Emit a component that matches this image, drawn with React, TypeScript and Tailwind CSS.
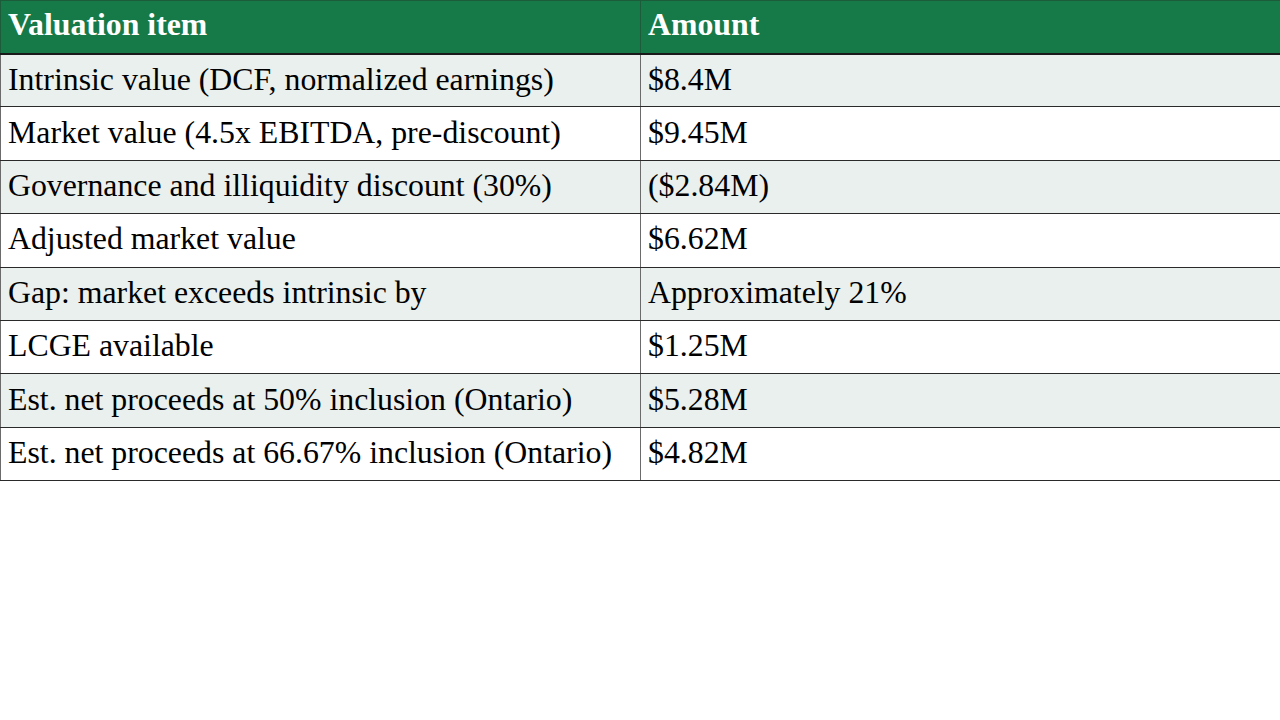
import React from "react";

const rows: [string, string][] = [
  ["Intrinsic value (DCF, normalized earnings)", "$8.4M"],
  ["Market value (4.5x EBITDA, pre-discount)", "$9.45M"],
  ["Governance and illiquidity discount (30%)", "($2.84M)"],
  ["Adjusted market value", "$6.62M"],
  ["Gap: market exceeds intrinsic by", "Approximately 21%"],
  ["LCGE available", "$1.25M"],
  ["Est. net proceeds at 50% inclusion (Ontario)", "$5.28M"],
  ["Est. net proceeds at 66.67% inclusion (Ontario)", "$4.82M"],
];

export default function App() {
  return (
    <div
      className="w-[1280px] h-[720px] bg-white overflow-hidden"
      style={{ fontFamily: '"Liberation Serif", "Times New Roman", serif' }}
    >
      <table className="w-[1280px] border-collapse table-fixed text-[31.8px] leading-none text-black">
        <colgroup>
          <col className="w-[640px]" />
          <col className="w-[640px]" />
        </colgroup>
        <thead>
          <tr className="h-[53px] bg-[#167a48] text-white">
            <th className="text-left font-bold px-[7px] pb-[3px] border border-[#1d5c3a] border-b-[#1a1a1a] border-b-2">
              Valuation item
            </th>
            <th className="text-left font-bold px-[7px] pb-[3px] border border-[#1d5c3a] border-b-[#1a1a1a] border-b-2">
              Amount
            </th>
          </tr>
        </thead>
        <tbody>
          {rows.map(([a, b], i) => (
            <tr
              key={i}
              className={`h-[53.4px] ${i % 2 === 0 ? "bg-[#eaf0ee]" : "bg-white"}`}
            >
              <td className="px-[7px] pb-[2px] border border-[#6b6b6b] border-b-[#2a2a2a] whitespace-nowrap">
                {a}
              </td>
              <td className="px-[7px] pb-[2px] border border-[#6b6b6b] border-b-[#2a2a2a] whitespace-nowrap">
                {b}
              </td>
            </tr>
          ))}
        </tbody>
      </table>
    </div>
  );
}
